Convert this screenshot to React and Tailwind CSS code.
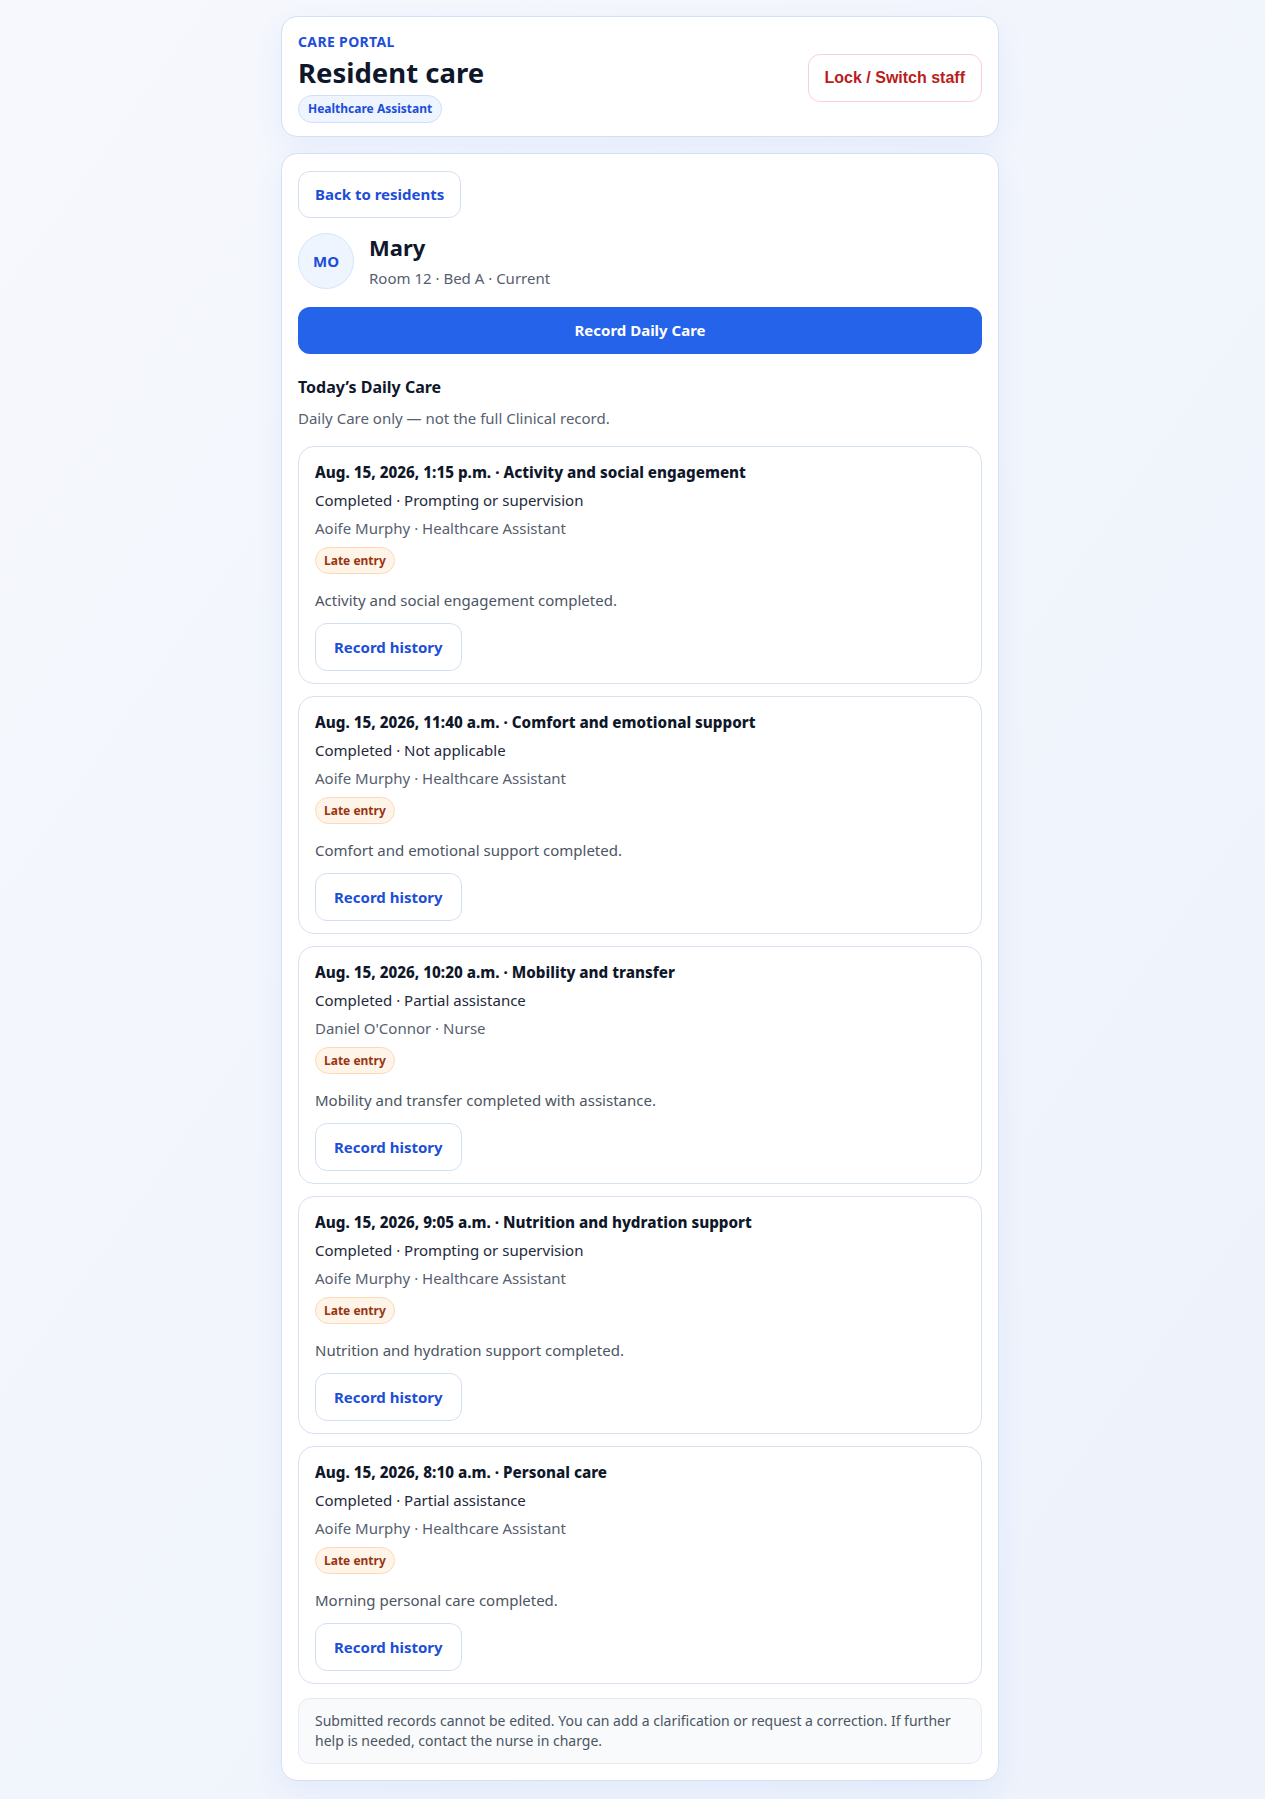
import React from "react";

const entries = [
  {
    id: 1,
    when: "Aug. 15, 2026, 1:15 p.m.",
    title: "Activity and social engagement",
    status: "Completed · Prompting or supervision",
    staff: "Aoife Murphy · Healthcare Assistant",
    note: "Activity and social engagement completed.",
  },
  {
    id: 2,
    when: "Aug. 15, 2026, 11:40 a.m.",
    title: "Comfort and emotional support",
    status: "Completed · Not applicable",
    staff: "Aoife Murphy · Healthcare Assistant",
    note: "Comfort and emotional support completed.",
  },
  {
    id: 3,
    when: "Aug. 15, 2026, 10:20 a.m.",
    title: "Mobility and transfer",
    status: "Completed · Partial assistance",
    staff: "Daniel O'Connor · Nurse",
    note: "Mobility and transfer completed with assistance.",
  },
  {
    id: 4,
    when: "Aug. 15, 2026, 9:05 a.m.",
    title: "Nutrition and hydration support",
    status: "Completed · Prompting or supervision",
    staff: "Aoife Murphy · Healthcare Assistant",
    note: "Nutrition and hydration support completed.",
  },
  {
    id: 5,
    when: "Aug. 15, 2026, 8:10 a.m.",
    title: "Personal care",
    status: "Completed · Partial assistance",
    staff: "Aoife Murphy · Healthcare Assistant",
    note: "Morning personal care completed.",
  },
];

const EntryCard = ({ entry }) => {
  return (
    <div className="flex flex-col items-start rounded-2xl border border-[#d6e2f0] bg-white px-4 pt-[14px] pb-[12px]">
      <p className="text-[15.2px] leading-[22px] font-extrabold text-[#0f172a]">
        {entry.when} · {entry.title}
      </p>
      <p className="mt-1.5 text-[15px] leading-[22px] text-[#1e293b]">{entry.status}</p>
      <p className="mt-1.5 text-[15px] leading-[22px] text-[#556070]">{entry.staff}</p>
      <span className="mt-2 flex h-[27px] items-center rounded-full border border-[#fcd9b6] bg-[#fff4e8] px-2 text-[12px] leading-none font-bold text-[#9a3412]">
        Late entry
      </span>
      <p className="mt-[15px] text-[15px] leading-[22px] text-[#4b5563]">{entry.note}</p>
      <button className="mt-3 flex h-[48px] items-center rounded-xl border border-[#d3e0f0] bg-white px-[18px] text-[15px] font-bold text-[#1d4ed8]">
        Record history
      </button>
    </div>
  );
};

const App = () => {
  return (
    <div
      className="min-h-screen bg-gradient-to-br from-[#f6f8fd] to-[#edf2fb] pl-[15px] pt-4 pb-4"
      style={{ fontFamily: '"Noto Sans", "Open Sans", sans-serif' }}
    >
      <div className="mx-auto flex w-[718px] flex-col gap-4">
        {/* header */}
        <header className="flex items-center justify-between rounded-2xl border border-[#d3e1f2] bg-white px-4 pt-4 pb-[13px] shadow-[0_10px_30px_rgba(37,99,235,0.07)]">
          <div className="flex flex-col items-start">
            <p className="text-[14px] leading-[18px] font-bold uppercase tracking-wide text-[#1d4ed8]">
              Care portal
            </p>
            <h1 className="mt-[5px] text-[27.5px] leading-[34px] font-bold text-[#0f172a]">
              Resident care
            </h1>
            <span className="mt-[5px] flex h-[28px] items-center rounded-full border border-[#cfe0fb] bg-[#eef5ff] px-[9px] text-[12px] leading-none font-bold text-[#1d4ed8]">
              Healthcare Assistant
            </span>
          </div>
          <button
            className="h-[48px] rounded-xl border border-[#fbcfd2] bg-white px-4 text-[16px] font-bold text-[#b91c1c]"
            style={{ fontFamily: '"Liberation Sans", Arial, sans-serif' }}
          >
            Lock / Switch staff
          </button>
        </header>

        {/* resident */}
        <main className="rounded-2xl border border-[#d3e1f2] bg-white p-4 pt-[17px] shadow-[0_10px_30px_rgba(37,99,235,0.07)]">
          <button className="flex h-[47px] items-center rounded-xl border border-[#d3e0f0] bg-white px-4 text-[15px] font-bold text-[#1d4ed8]">
            Back to residents
          </button>

          <div className="mt-[15px] flex items-center gap-[15px]">
            <div className="flex h-14 w-14 items-center justify-center rounded-full border border-[#d6e4fa] bg-[#eef5ff] text-[15px] font-bold text-[#1d4ed8]">
              MO
            </div>
            <div className="pt-px">
              <p className="text-[22px] leading-[26px] font-bold text-[#0f172a]">Mary</p>
              <p className="mt-[7px] text-[15px] leading-[22px] text-[#556070]">Room 12 · Bed A · Current</p>
            </div>
          </div>

          <button className="mt-[18px] flex h-[47px] w-full items-center justify-center rounded-xl bg-[#2563eb] text-[15px] font-bold text-white">
            Record Daily Care
          </button>

          <h2 className="mt-[21px] text-[16px] leading-[24px] font-bold text-[#0f172a]">Today’s Daily Care</h2>
          <p className="mt-2 text-[15px] leading-[22px] text-[#556070]">
            Daily Care only — not the full Clinical record.
          </p>

          <div className="mt-[17px] flex flex-col gap-3">
            {entries.map((entry) => (
              <EntryCard key={entry.id} entry={entry} />
            ))}
          </div>

          <div className="mt-[14px] rounded-xl border border-[#e6ebf2] bg-[#f8fafc] px-4 py-3 text-[14px] leading-[20px] text-[#4b5563]">
            Submitted records cannot be edited. You can add a clarification or request a correction. If further
            help is needed, contact the nurse in charge.
          </div>
        </main>
      </div>
    </div>
  );
};

export default App;
